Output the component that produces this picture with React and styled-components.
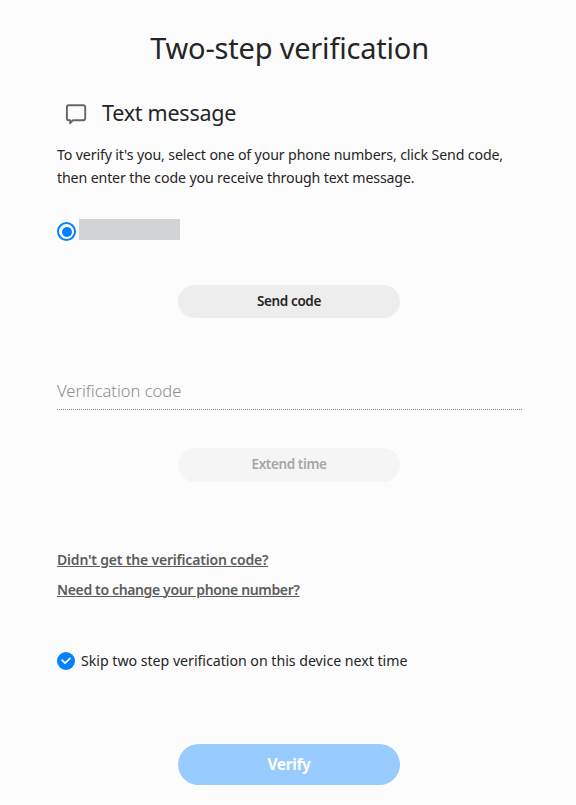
import React from "react";
import styled, { createGlobalStyle } from "styled-components";

const GlobalStyle = createGlobalStyle`
  *, *::before, *::after { box-sizing: border-box; }
  body {
    margin: 0;
    background: #fcfcfc;
    color: #252525;
    font-family: "Noto Sans", "Open Sans", sans-serif;
  }
`;

const Page = styled.main`
  display: flex;
  flex-direction: column;
  width: 576px;
  height: 805px;
  padding: 28px 54px 0 57px;
  overflow: hidden;
`;

const Title = styled.h1`
  margin: 0;
  font-size: 29px;
  font-weight: 400;
  line-height: 40px;
  letter-spacing: -0.2px;
  text-align: center;
  white-space: nowrap;
`;

const MethodHeading = styled.h2`
  display: flex;
  align-items: center;
  gap: 15px;
  margin: 30px 0 0 8px;
  font-size: 21.5px;
  font-weight: 400;
  line-height: 30px;
  letter-spacing: -0.25px;
`;

const MessageIcon = styled.svg`
  flex: none;
  width: 22px;
  height: 22px;
  margin-top: 2px;
`;

const Description = styled.p`
  margin: 15px 0 0;
  font-size: 14.2px;
  line-height: 23px;
  letter-spacing: -0.14px;
  white-space: nowrap;
`;

const PhoneOption = styled.label`
  display: flex;
  align-items: flex-start;
  gap: 3px;
  height: 22px;
  margin-top: 30px;
`;

const Radio = styled.span`
  display: grid;
  place-items: center;
  width: 19px;
  height: 19px;
  margin-top: 3px;
  border: 2px solid #0381fe;
  border-radius: 50%;

  &::before {
    content: "";
    width: 10px;
    height: 10px;
    border-radius: 50%;
    background: #0381fe;
  }
`;

const MaskedNumber = styled.span`
  width: 101px;
  height: 21px;
  background: #d2d3d4;
`;

const Button = styled.button`
  flex: none;
  width: 222px;
  height: ${(p) => p.$height}px;
  margin: ${(p) => p.$top}px 0 0 121px;
  padding: 0 0 ${(p) => p.$lift || 1}px;
  border: 0;
  border-radius: 21px;
  background: ${(p) => p.$background};
  color: ${(p) => p.$color};
  font-family: inherit;
  font-size: ${(p) => p.$size || 13.5}px;
  font-weight: ${(p) => p.$weight || 600};
  letter-spacing: -0.38px;
`;

const CodeField = styled.div`
  height: 36px;
  margin-top: 56px;
  border-bottom: 1px dotted #858585;
  color: #8c8c8c;
  font-size: 16.5px;
  font-weight: 300;
  line-height: 34px;
`;

const Links = styled.nav`
  display: flex;
  flex-direction: column;
  align-items: flex-start;
  margin-top: 63px;
`;

const HelpLink = styled.a`
  color: #5c5c5c;
  font-size: 14px;
  font-weight: 600;
  line-height: 30px;
  letter-spacing: ${(p) => p.$tracking}px;
  text-decoration: underline;
  text-decoration-thickness: 1px;
  text-underline-offset: 1px;
  text-decoration-skip-ink: auto;
  white-space: nowrap;
`;

const SkipOption = styled.label`
  display: flex;
  align-items: center;
  gap: 6px;
  height: 24px;
  margin-top: 44px;
  font-size: 14.2px;
  line-height: 24px;
  letter-spacing: -0.03px;
  white-space: nowrap;
`;

const CheckIcon = styled.svg`
  flex: none;
  width: 18px;
  height: 18px;
`;

export default function App() {
  return (
    <>
      <GlobalStyle />
      <Page>
        <Title>Two-step verification</Title>
        <MethodHeading>
          <MessageIcon viewBox="0 0 22 22" fill="none">
            <path
              d="M3.7 2.2H18.3Q20.2 2.2 20.2 4.1V15.3Q20.2 17.2 18.3 17.2H8L5.2 20.2V17.2H3.7Q1.9 17.2 1.9 15.3V4.1Q1.9 2.2 3.7 2.2Z"
              stroke="#666"
              strokeWidth="1.9"
              strokeLinejoin="round"
            />
          </MessageIcon>
          Text message
        </MethodHeading>
        <Description>
          To verify it's you, select one of your phone numbers, click Send code,
          <br />
          then enter the code you receive through text message.
        </Description>
        <PhoneOption>
          <Radio />
          <MaskedNumber />
        </PhoneOption>
        <Button $height={33} $top={44} $background="#ededed" $color="#252525">
          Send code
        </Button>
        <CodeField>Verification code</CodeField>
        <Button
          $height={34}
          $top={38}
          $lift={3}
          $background="#f5f5f5"
          $color="#a6a6a6"
        >
          Extend time
        </Button>
        <Links>
          <HelpLink $tracking={-0.19}>Didn't get the verification code?</HelpLink>
          <HelpLink $tracking={-0.36}>Need to change your phone number?</HelpLink>
        </Links>
        <SkipOption>
          <CheckIcon viewBox="0 0 18 18" fill="none">
            <circle cx="9" cy="9" r="9" fill="#0381fe" />
            <path
              d="M5 8.2L8 11.2L13 6.4"
              stroke="#fff"
              strokeWidth="1.7"
              strokeLinecap="round"
              strokeLinejoin="round"
            />
          </CheckIcon>
          Skip two step verification on this device next time
        </SkipOption>
        <Button
          $height={41}
          $top={71}
          $background="#98cbff"
          $color="#fff"
          $size={15.5}
          $weight={700}
        >
          Verify
        </Button>
      </Page>
    </>
  );
}
